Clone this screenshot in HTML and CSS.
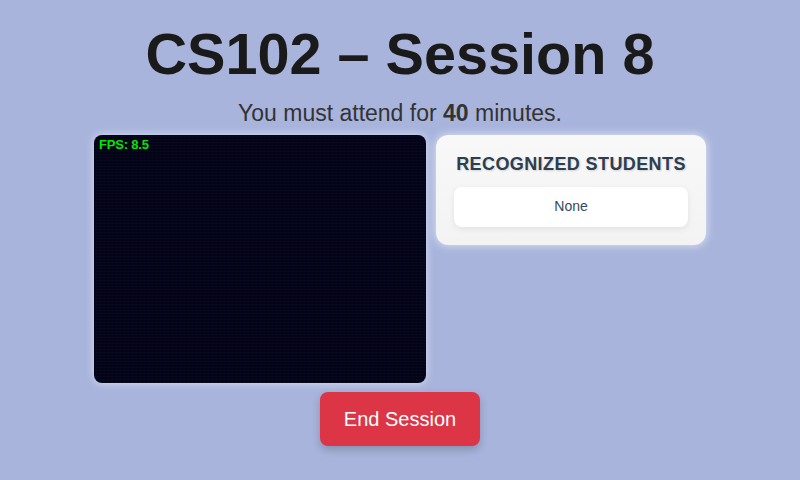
FILE: index.html
```html
<!DOCTYPE html>
<html lang="en">
<head>
<meta charset="utf-8">
<title>CS102 – Session 8</title>
<link rel="stylesheet" href="styles.css">
</head>
<body>
<main class="page">
  <h1 class="title">CS102 – Session 8</h1>
  <p class="subtitle">You must attend for <strong>40</strong> minutes.</p>
  <div class="content">
    <div class="video">
      <span class="fps">FPS: 8.5</span>
    </div>
    <section class="card">
      <h2 class="card-title">RECOGNIZED STUDENTS</h2>
      <div class="list">None</div>
    </section>
  </div>
  <button class="end-btn" type="button">End Session</button>
</main>
</body>
</html>
```
FILE: styles.css
```css
html, body {
  margin: 0;
  padding: 0;
}
body {
  background: #a8b4dc;
  font-family: "Liberation Sans", Arial, sans-serif;
  width: 800px;
  height: 480px;
  overflow: hidden;
}
.page {
  display: flex;
  flex-direction: column;
  align-items: center;
  padding-top: 21px;
}
.title {
  margin: 0;
  font-size: 57.6px;
  line-height: 66px;
  font-weight: 700;
  color: #1a1a1a;
}
.subtitle {
  margin: 12px 0 0;
  font-size: 23px;
  line-height: 28px;
  color: #333333;
}
.subtitle strong {
  color: #333333;
}
.content {
  display: flex;
  gap: 10px;
  align-items: flex-start;
  margin-top: 8px;
}
.video {
  position: relative;
  width: 332px;
  height: 248px;
  border-radius: 8px;
  background-color: #03031a;
  background-image:
    repeating-linear-gradient(0deg, rgba(20,20,60,0.25) 0 1px, transparent 1px 3px),
    repeating-linear-gradient(90deg, rgba(0,0,0,0.35) 0 1px, transparent 1px 4px);
  box-shadow: 0 0 8px rgba(255,255,255,0.6);
  overflow: hidden;
}
.fps {
  position: absolute;
  left: 5px;
  top: 2px;
  font-family: "Liberation Sans", Arial, sans-serif;
  font-weight: 700;
  font-size: 13px;
  line-height: 15px;
  color: #00e600;
  letter-spacing: -0.2px;
}
.card {
  width: 234px;
  padding: 18px 18px 18px;
  border-radius: 12px;
  background: linear-gradient(180deg, #f8f8f8, #f3f3f3);
  box-shadow: 0 0 10px rgba(255,255,255,0.7);
}
.card-title {
  margin: 0;
  font-size: 18px;
  line-height: 22px;
  font-weight: 700;
  letter-spacing: 0.4px;
  color: #2c3e50;
  text-align: center;
  text-shadow: 1px 1px 2px rgba(0,0,0,0.15);
}
.list {
  margin-top: 12px;
  height: 40px;
  line-height: 39px;
  background: #ffffff;
  border-radius: 8px;
  box-shadow: 0 2px 6px rgba(0,0,0,0.08);
  text-align: center;
  font-size: 14px;
  color: #34495e;
}
.end-btn {
  margin-top: 9px;
  width: 160px;
  height: 54px;
  border: none;
  border-radius: 8px;
  background: #dc3545;
  color: #ffffff;
  font-family: "Liberation Sans", Arial, sans-serif;
  font-size: 20px;
  box-shadow: 0 4px 8px rgba(0,0,0,0.2);
  cursor: pointer;
}
```
